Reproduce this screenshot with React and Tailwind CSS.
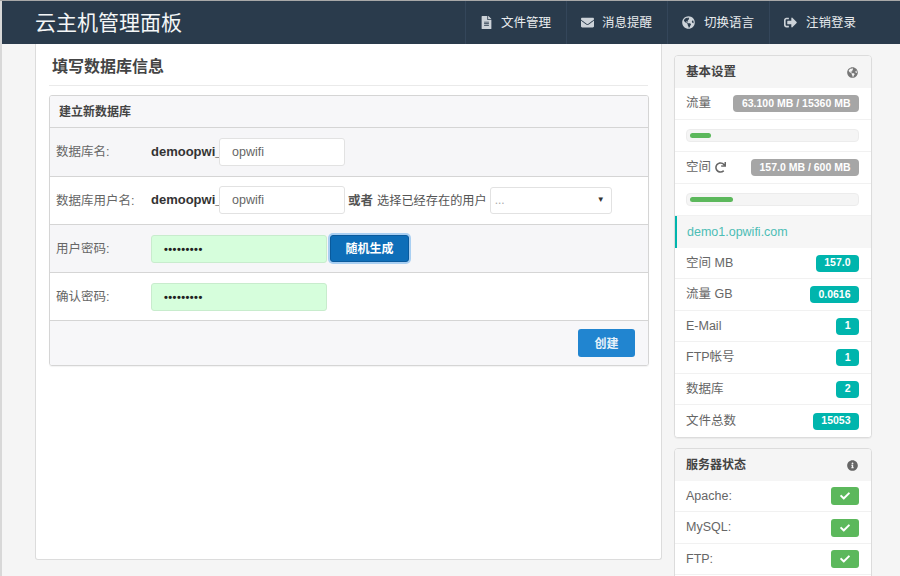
import React from "react";
import { FaFileAlt, FaEnvelope, FaGlobeAmericas, FaSignOutAlt, FaRedo, FaCheck, FaInfoCircle } from "react-icons/fa";

function NavItem({ icon, label, w, iw = "w-[35px] pl-[5px]" }) {
  return (
    <div className={`flex items-center h-full border-l border-[#34465a] ${w}`}>
      <span className={`text-[#cdd3d9] text-[13px] flex justify-center ${iw}`}>{icon}</span>
      <span className="text-[#e8ebee] text-[12.5px] pt-[1px]">{label}</span>
    </div>
  );
}

function FormRow({ label, shaded, children, h = "h-[48px]", extra = "" }) {
  return (
    <div className={`flex items-center ${h} border-b border-[#d5d5d5] ${shaded ? "bg-[#f6f6f8]" : "bg-white"}`}>
      <div className="w-[101px] pl-[6px] pt-[1px] text-[12.5px] text-[#666]">{label}</div>
      <div className={`flex items-center ${extra}`}>{children}</div>
    </div>
  );
}

function Prefixed() {
  return (
    <>
      <span className="w-[68px] text-[13px] font-bold text-[#333] whitespace-nowrap -mt-[1px]">demoopwi_</span>
      <div className="w-[126px] h-[28px] bg-white border border-[#e2e2e2] rounded-[3px] pl-[12px] pt-[1px] flex items-center text-[12.5px] text-[#666]">opwifi</div>
    </>
  );
}

function Pwd() {
  return (
    <div className="w-[176px] h-[28px] bg-[#d6fedc] border border-[#c8eccd] rounded-[3px] pl-[12px] pt-[1px] flex items-center text-[11px] font-bold text-[#222] tracking-[0.45px]">•••••••••</div>
  );
}

function Badge({ color = "bg-[#00b5ad]", children }) {
  return (
    <span className={`${color} text-white text-[10.5px] font-bold rounded-[4px] h-[17px] px-[8.5px] flex items-center whitespace-nowrap`}>{children}</span>
  );
}

function SideRow({ label, badge, color, last }) {
  return (
    <div className={`flex items-center justify-between pl-[11px] pr-[12px] pt-[1px] h-[31.5px] ${last ? "" : "border-b border-[#f1f1f1]"} bg-white`}>
      <span className="text-[12.5px] text-[#666]">{label}</span>
      <Badge color={color}>{badge}</Badge>
    </div>
  );
}

function Progress({ w }) {
  return (
    <div className="h-[32px] flex items-center pl-[11px] pr-[12px] bg-white border-b border-[#f1f1f1]">
      <div className="w-full h-[13px] bg-[#f5f5f5] border border-[#ececec] rounded-[4px] pl-[3px] flex items-center">
        <div className={`h-[5px] bg-[#5cb85c] rounded-[3px] ${w}`} />
      </div>
    </div>
  );
}

function StatusRow({ label }) {
  return (
    <div className="flex items-center justify-between pl-[11px] pr-[12px] pt-[1px] h-[31.5px] border-b border-[#f1f1f1] bg-white shrink-0">
      <span className="text-[12.5px] text-[#666]">{label}</span>
      <span className="w-[28px] h-[18px] bg-[#5cb85c] rounded-[3px] flex items-center justify-center text-white text-[10px]"><FaCheck /></span>
    </div>
  );
}

export default function App() {
  return (
    <div className="h-[576px] w-[900px] overflow-hidden bg-[#f5f5f5] flex flex-col font-['Liberation_Sans','Noto_Sans_CJK_SC',sans-serif]">
      <div className="h-[1px] bg-[#a8a8a8] shrink-0" />
      <div className="flex flex-1 min-h-0">
        <div className="w-[2px] bg-[#d8d8d8] shrink-0" />
        <div className="flex-1 min-w-0 flex flex-col">
          <header className="h-[43px] shrink-0 bg-[#2a3b4c] flex items-center justify-between">
            <div className="pl-[33px] text-[21px] text-[#f4f6f7] leading-none -mt-[1px]">云主机管理面板</div>
            <nav className="flex h-full">
              <NavItem icon={<FaFileAlt />} label="文件管理" w="w-[101px]" />
              <NavItem icon={<FaEnvelope />} label="消息提醒" w="w-[101px]" />
              <NavItem icon={<FaGlobeAmericas />} label="切换语言" w="w-[102px]" iw="w-[36px] pl-[5px]" />
              <NavItem icon={<FaSignOutAlt />} label="注销登录" w="w-[131px]" iw="w-[36px] pl-[5px]" />
            </nav>
          </header>

          <div className="flex flex-1 min-h-0">
            <main className="ml-[33px] w-[627px] h-[516px] shrink-0 bg-white border border-t-0 border-[#dcdcdc] rounded-b-[3px] px-[13px]">
              <h1 className="h-[42px] border-b border-[#eaeaea] pl-[3px] pt-[11px] text-[16px] leading-[24px] font-bold text-[#444]">填写数据库信息</h1>
              <section className="mt-[9px] w-[600px] border border-[#d5d5d5] rounded-[3px] overflow-hidden shadow-[0_1px_1px_rgba(0,0,0,0.05)]">
                <div className="h-[32px] flex items-center pl-[9px] pt-[1px] bg-[#f7f7f9] border-b border-[#d5d5d5] text-[12px] font-bold text-[#444]">建立新数据库</div>
                <FormRow label="数据库名:" shaded h="h-[49px]"><Prefixed /></FormRow>
                <FormRow label="数据库用户名:" extra="-mt-[1px]">
                  <Prefixed />
                  <span className="ml-[3px] pt-[2px] text-[12.5px] font-bold text-[#555] whitespace-nowrap">或者</span>
                  <span className="ml-[4px] pt-[2px] text-[12.2px] text-[#555] whitespace-nowrap">选择已经存在的用户</span>
                  <div className="ml-[3px] w-[122px] h-[27px] bg-white border border-[#e2e2e2] rounded-[3px] flex items-center justify-between pl-[4px] pr-[6px]">
                    <span className="text-[12px] text-[#aaa]">...</span>
                    <span className="text-[8px] text-[#333]">▼</span>
                  </div>
                </FormRow>
                <FormRow label="用户密码:" shaded>
                  <Pwd />
                  <button className="ml-[3px] w-[79px] h-[27px] pt-[1px] bg-[#0e6eb8] border border-[#0a5a9c] rounded-[3px] text-white text-[12px] font-bold shadow-[0_0_0_2px_#a9cff2]">随机生成</button>
                </FormRow>
                <FormRow label="确认密码:"><Pwd /></FormRow>
                <div className="h-[44px] bg-[#f7f7f9] flex items-center justify-end pr-[13px]">
                  <button className="w-[57px] h-[28px] pt-[1px] bg-[#2185d0] rounded-[3px] text-[#e8f2fa] text-[12px] font-bold">创建</button>
                </div>
              </section>
            </main>

            <aside className="ml-[12px] w-[198px] shrink-0 pt-[11px] flex flex-col gap-[10px]">
              <div className="shrink-0 border border-[#dcdcdc] rounded-[4px] overflow-hidden shadow-[0_1px_1px_rgba(0,0,0,0.05)] bg-white">
                <div className="h-[32px] bg-[#f5f5f5] flex items-center justify-between pl-[11px] pr-[13px] pt-[1px]">
                  <span className="text-[12.5px] font-bold text-[#444]">基本设置</span>
                  <FaGlobeAmericas className="text-[#777] text-[11px]" />
                </div>
                <SideRow label="流量" badge="63.100 MB / 15360 MB" color="bg-[#a6a6a6]" />
                <Progress w="w-[21px]" />
                <div className="flex items-center justify-between pl-[11px] pr-[12px] pt-[1px] h-[32px] border-b border-[#f1f1f1]">
                  <span className="text-[12.5px] text-[#666] flex items-center gap-[4px]">空间 <FaRedo className="text-[11px]" /></span>
                  <Badge color="bg-[#a6a6a6]">157.0 MB / 600 MB</Badge>
                </div>
                <Progress w="w-[43px]" />
                <div className="h-[32px] flex items-center pl-[10px] pt-[1px] bg-[#f6f6f6] border-l-2 border-[#00b5ad] text-[12.5px] text-[#4dbdb5]">demo1.opwifi.com</div>
                <SideRow label="空间 MB" badge="157.0" />
                <SideRow label="流量 GB" badge="0.0616" />
                <SideRow label="E-Mail" badge="1" />
                <SideRow label="FTP帐号" badge="1" />
                <SideRow label="数据库" badge="2" />
                <SideRow label="文件总数" badge="15053" last />
              </div>

              <div className="shrink-0 border border-[#dcdcdc] rounded-[4px] overflow-hidden bg-white flex flex-col h-[140px]">
                <div className="h-[32px] shrink-0 bg-[#f5f5f5] flex items-center justify-between pl-[11px] pr-[13px] pt-[1px]">
                  <span className="text-[12px] font-bold text-[#444]">服务器状态</span>
                  <FaInfoCircle className="text-[#666] text-[11px]" />
                </div>
                <StatusRow label="Apache:" />
                <StatusRow label="MySQL:" />
                <StatusRow label="FTP:" />
              </div>
            </aside>
          </div>
        </div>
      </div>
    </div>
  );
}
